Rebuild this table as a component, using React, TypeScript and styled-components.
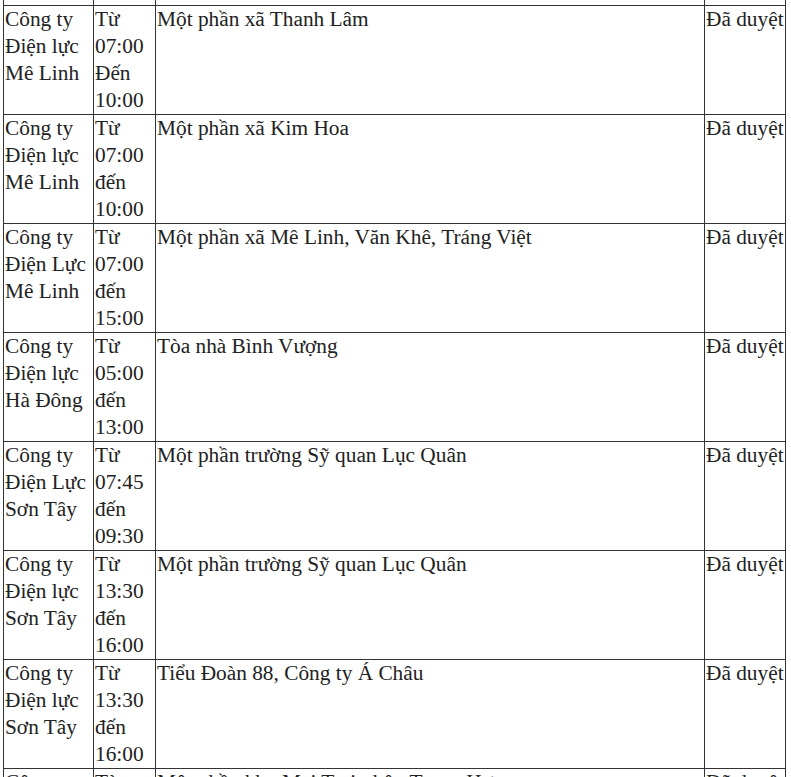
import React from 'react'
import styled, { createGlobalStyle } from 'styled-components'

const GlobalStyle = createGlobalStyle`
  html, body {
    margin: 0;
    padding: 0;
    background: #ffffff;
  }
`

const Page = styled.div`
  height: 777px;
  overflow: hidden;
  padding-left: 3px;
  box-sizing: border-box;
`

const Table = styled.table`
  border-collapse: collapse;
  table-layout: fixed;
  width: 783px;
  font-family: 'Liberation Serif', 'Times New Roman', serif;
  font-size: 21.33px;
  line-height: 27px;
  color: #222222;
`

const StubCell = styled.td`
  height: 5px;
  padding: 0;
  border: 1px solid #333333;
  border-top: none;
`

const Cell = styled.td`
  height: 108px;
  padding: 0 0 0 1px;
  border: 1px solid #333333;
  vertical-align: top;
  word-wrap: break-word;
`

type Outage = {
  company: string[]
  start: string
  end: string
  endWord: string
  area: string
  status: string
}

const rows: Outage[] = [
  { company: ['Công ty', 'Điện lực', 'Mê Linh'], start: '07:00', end: '10:00', endWord: 'Đến', area: 'Một phần xã Thanh Lâm', status: 'Đã duyệt' },
  { company: ['Công ty', 'Điện lực', 'Mê Linh'], start: '07:00', end: '10:00', endWord: 'đến', area: 'Một phần xã Kim Hoa', status: 'Đã duyệt' },
  { company: ['Công ty', 'Điện Lực', 'Mê Linh'], start: '07:00', end: '15:00', endWord: 'đến', area: 'Một phần xã Mê Linh, Văn Khê, Tráng Việt', status: 'Đã duyệt' },
  { company: ['Công ty', 'Điện lực', 'Hà Đông'], start: '05:00', end: '13:00', endWord: 'đến', area: 'Tòa nhà Bình Vượng', status: 'Đã duyệt' },
  { company: ['Công ty', 'Điện Lực', 'Sơn Tây'], start: '07:45', end: '09:30', endWord: 'đến', area: 'Một phần trường Sỹ quan Lục Quân', status: 'Đã duyệt' },
  { company: ['Công ty', 'Điện lực', 'Sơn Tây'], start: '13:30', end: '16:00', endWord: 'đến', area: 'Một phần trường Sỹ quan Lục Quân', status: 'Đã duyệt' },
  { company: ['Công ty', 'Điện lực', 'Sơn Tây'], start: '13:30', end: '16:00', endWord: 'đến', area: 'Tiểu Đoàn 88, Công ty Á Châu', status: 'Đã duyệt' },
  { company: ['Công ty', 'Điện lực', 'Sơn Tây'], start: '07:00', end: '12:00', endWord: 'đến', area: 'Một phần khu Mai Trai, thôn Trung Hưng', status: 'Đã duyệt' },
]

export default function App() {
  return (
    <>
      <GlobalStyle />
      <Page>
        <Table>
          <colgroup>
            <col style={{ width: 90 }} />
            <col style={{ width: 62 }} />
            <col style={{ width: 549 }} />
            <col style={{ width: 81 }} />
          </colgroup>
          <tbody>
            <tr>
              <StubCell />
              <StubCell />
              <StubCell />
              <StubCell />
            </tr>
            {rows.map((row, i) => (
              <tr key={i}>
                <Cell>{row.company.join(' ')}</Cell>
                <Cell>
                  Từ {row.start} {row.endWord} {row.end}
                </Cell>
                <Cell>{row.area}</Cell>
                <Cell>{row.status}</Cell>
              </tr>
            ))}
          </tbody>
        </Table>
      </Page>
    </>
  )
}
